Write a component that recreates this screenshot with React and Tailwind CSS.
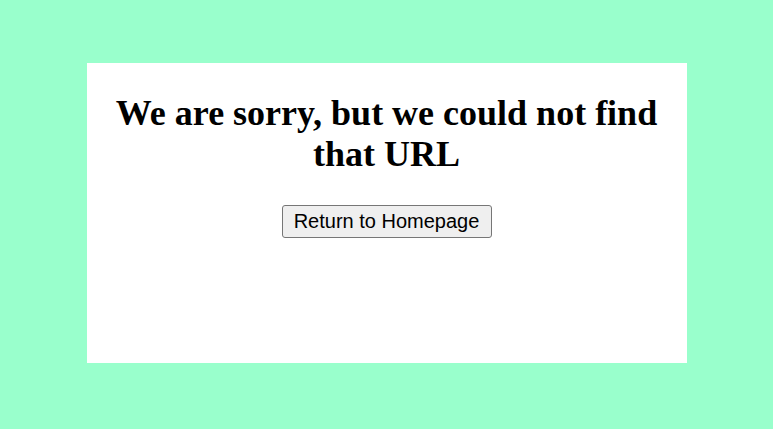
export default function App() {
  return (
    <div className="min-h-screen bg-[#99ffcc] pt-[63px]">
      <div className="mx-auto w-[600px] h-[300px] bg-white px-5 pt-[30px] text-center">
        <h1 className="text-[36px] leading-[1.15] font-bold text-black" style={{ fontFamily: '"Liberation Serif", serif' }}>
          We are sorry, but we could not find that URL
        </h1>
        <button
          className="mt-[29px] w-[210px] py-[3px] text-[20px] leading-[25px] text-black bg-[#efefef] border border-[#767676] rounded-[3px]"
          style={{ fontFamily: '"Liberation Sans", Arial, sans-serif' }}
        >
          Return to Homepage
        </button>
      </div>
    </div>
  );
}
